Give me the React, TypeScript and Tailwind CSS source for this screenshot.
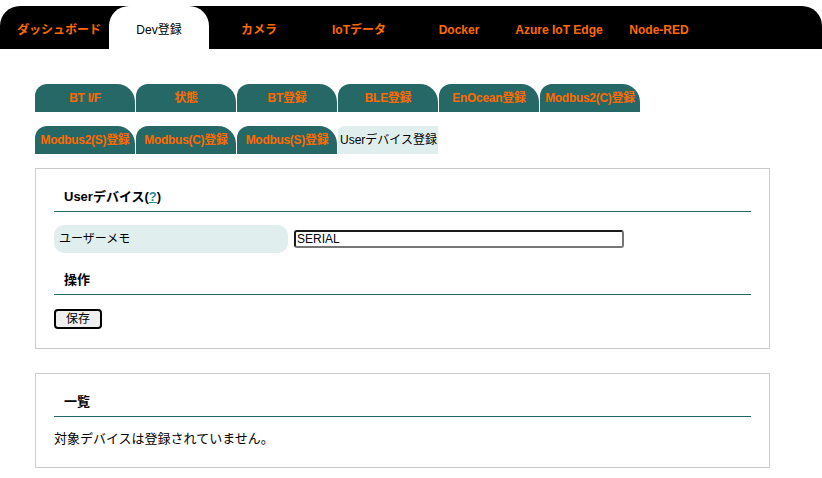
import React from "react";

const font = { fontFamily: '"Liberation Sans", Arial, "Noto Sans CJK JP", sans-serif' };

const nav = ["ダッシュボード", "Dev登録", "カメラ", "IoTデータ", "Docker", "Azure IoT Edge", "Node-RED"];
const row1 = ["BT I/F", "状態", "BT登録", "BLE登録", "EnOcean登録", "Modbus2(C)登録"];
const row2 = ["Modbus2(S)登録", "Modbus(C)登録", "Modbus(S)登録"];

function Tab({ label }: { label: string }) {
  return (
    <div className="w-[100px] h-[28px] bg-[#256866] rounded-tl-[12px] rounded-tr-[18px] flex items-center justify-center text-[12px] font-bold text-[#ff6a00] whitespace-nowrap tracking-[-0.3px]">
      {label}
    </div>
  );
}

function Heading({ children }: { children: React.ReactNode }) {
  return (
    <div className="pl-[10px] pb-[4px] leading-[20px] text-[13px] font-bold text-black border-b border-[#236866]">
      {children}
    </div>
  );
}

export default function App() {
  return (
    <div className="w-[822px] h-[478px] bg-white" style={font}>
      <div className="pt-[6px]">
        <div className="h-[43px] bg-black rounded-t-[20px] flex pl-[9px]">
          {nav.map((n) =>
            n === "Dev登録" ? (
              <div key={n} className="w-[100px] h-full bg-white rounded-t-[20px] flex items-center justify-center pt-[4px] text-[12px] text-black">
                {n}
              </div>
            ) : (
              <div key={n} className="w-[100px] h-full flex items-center justify-center pt-[4px] text-[12px] font-bold text-[#ff6a00] whitespace-nowrap">
                {n}
              </div>
            )
          )}
        </div>
      </div>

      <div className="ml-[35px] mt-[35px] flex flex-col gap-[14px]">
        <div className="flex gap-[1px]">
          {row1.map((r) => (
            <Tab key={r} label={r} />
          ))}
        </div>
        <div className="flex gap-[1px]">
          {row2.map((r) => (
            <Tab key={r} label={r} />
          ))}
          <div className="w-[100px] h-[28px] bg-[#e0eeee] rounded-tl-[6px] flex items-center pl-[2px] text-[12px] text-black whitespace-nowrap">
            Userデバイス登録
          </div>
        </div>
      </div>

      <div className="ml-[35px] mt-[14px] w-[735px] border border-[#cccccc] px-[18px] pt-[18px] pb-[19px]">
        <Heading>
          Userデバイス(<span className="text-[#2a8a9a] underline">?</span>)
        </Heading>
        <div className="mt-[13px] flex items-center">
          <div className="w-[234px] h-[28px] bg-[#e0eeee] rounded-[10px] flex items-center pl-[5px] text-[12px] text-black">
            ユーザーメモ
          </div>
          <input
            className="ml-[6px] w-[330px] h-[18px] border-2 border-t-[#1a1a1a] border-l-[#1a1a1a] border-b-[#767676] border-r-[#767676] rounded-[3px] px-[1px] text-[12px] text-black outline-none"
            defaultValue="SERIAL"
            style={font}
          />
        </div>
        <div className="mt-[17px]">
          <Heading>操作</Heading>
        </div>
        <button className="mt-[14px] w-[48px] h-[20px] border-2 border-black rounded-[4px] bg-[#efefef] text-[12px] text-black flex items-center justify-center">
          保存
        </button>
      </div>

      <div className="ml-[35px] mt-[24px] w-[735px] border border-[#cccccc] px-[18px] pt-[18px] pb-[18px]">
        <Heading>一覧</Heading>
        <div className="mt-[12px] leading-[20px] text-[13px] text-black">対象デバイスは登録されていません。</div>
      </div>
    </div>
  );
}
